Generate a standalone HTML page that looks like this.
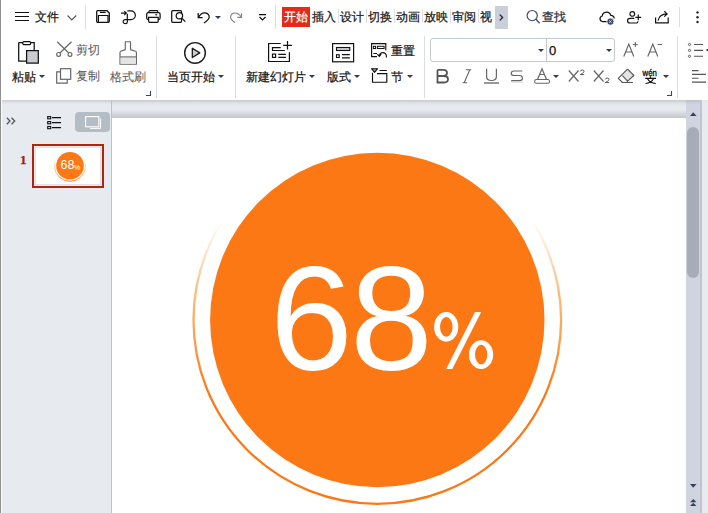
<!DOCTYPE html>
<html><head><meta charset="utf-8">
<style>
*{margin:0;padding:0;box-sizing:border-box}
html,body{width:708px;height:513px;overflow:hidden;background:#fff;font-family:"Liberation Sans",sans-serif;color:#222}
.a{position:absolute}
svg{position:absolute;overflow:visible}
.t{position:absolute;font-size:12px;line-height:12px;white-space:nowrap;color:#1a1a1a;-webkit-text-stroke:0.25px currentColor}
.g{color:#5e5e5e;-webkit-text-stroke:0.1px currentColor}
.sep{position:absolute;width:1px;background:#dadde5}
.tsep{position:absolute;width:1px;background:#dde0e6;top:9px;height:14px}
.arr{position:absolute;width:0;height:0;border-left:3px solid transparent;border-right:3px solid transparent;border-top:3px solid #2e3a55}
</style></head><body>
<!-- left window border -->
<div class="a" style="left:0;top:0;width:1px;height:513px;background:#8e8e8e"></div>

<!-- ===== TOP BAR ===== -->
<svg style="left:15px;top:12px" width="14" height="9"><path d="M0 0.5H14M0 4.5H14M0 8.5H14" stroke="#111" stroke-width="1.1"/></svg>
<div class="t" style="left:35px;top:11px">文件</div>
<svg style="left:67px;top:15px" width="10" height="6"><path d="M0.5 0.5L4.8 5L9.2 0.5" stroke="#555" stroke-width="1.1" fill="none"/></svg>
<div class="sep" style="left:85px;top:5px;height:24px"></div>
<!-- save -->
<svg style="left:96px;top:10px" width="14" height="13"><path d="M1.6 0.7H10.9L13.3 3.1V11.3Q13.3 12.3 12.3 12.3H1.6Q0.7 12.3 0.7 11.3V1.7Q0.7 0.7 1.6 0.7Z" stroke="#111" stroke-width="1.25" fill="none"/><path d="M4 2.4H9.6M2.4 12.3V5.5H12V12.3" stroke="#111" stroke-width="1.2" fill="none"/></svg>
<!-- share/route icon -->
<svg style="left:121px;top:10px" width="15" height="14"><path d="M0 3.1H5.2M3.3 1.1L5.3 3.1L3.3 5.1" stroke="#111" stroke-width="1.15" fill="none"/><path d="M6.3 3.8V12Q6.3 13.6 4.5 13.6Q2.2 13.6 2.2 11.6Q2.2 9.6 4.5 9.6H10A4.35 4.35 0 0 0 10 0.9H6.3" stroke="#111" stroke-width="1.2" fill="none"/></svg>
<!-- print -->
<svg style="left:146px;top:10px" width="15" height="13"><path d="M3 2.8V1.5Q3 0.7 3.8 0.7H11Q11.8 0.7 11.8 1.5V2.8" stroke="#111" stroke-width="1.2" fill="none"/><path d="M2.6 9.5H2.2Q0.7 9.5 0.7 8V4.3Q0.7 2.7 2.2 2.7H12.6Q14.1 2.7 14.1 4.3V8Q14.1 9.5 12.6 9.5H12.2M2.6 7.3V11.3Q2.6 12.3 3.6 12.3H11.2Q12.2 12.3 12.2 11.3V7.3Z" stroke="#111" stroke-width="1.25" fill="none"/><path d="M9.2 4.8H11.3" stroke="#111" stroke-width="1.1"/></svg>
<!-- preview -->
<svg style="left:171px;top:10px" width="16" height="14"><rect x="0.7" y="0.7" width="9.8" height="11.6" rx="1" stroke="#111" stroke-width="1.25" fill="none"/><circle cx="8.4" cy="5.7" r="3.2" stroke="#111" stroke-width="1.25" fill="#fff"/><path d="M10.8 8.1L14.3 11.6" stroke="#111" stroke-width="1.3"/></svg>
<!-- undo -->
<svg style="left:197px;top:12px" width="13" height="12"><path d="M1.2 1V5.6H5.6" stroke="#111" stroke-width="1.25" fill="none"/><path d="M1.6 5.2Q4 0.5 8.3 0.9Q12.2 1.6 12.2 5.2Q12.2 7.3 7 11" stroke="#111" stroke-width="1.25" fill="none"/></svg>
<div class="arr" style="left:215px;top:16px"></div>
<!-- redo -->
<svg style="left:230px;top:12px" width="13" height="12"><path d="M11.5 1.2V5.4H7.3" stroke="#7d8490" stroke-width="1.15" fill="none"/><path d="M11.1 5Q8.7 0.7 4.5 1Q0.6 1.7 0.6 5.2Q0.6 7.3 5 10.8" stroke="#7d8490" stroke-width="1.15" fill="none"/></svg>
<!-- customize -->
<svg style="left:259px;top:14px" width="8" height="7"><path d="M0 0.6H7M0.5 3L3.5 6L6.5 3" stroke="#111" stroke-width="1.2" fill="none"/></svg>
<div class="sep" style="left:275px;top:5px;height:24px"></div>
<!-- tabs -->
<div class="a" style="left:282px;top:7px;width:28px;height:20px;background:#e42a18"></div>
<div class="t" style="left:284px;top:11px;color:#fff">开始</div>
<div class="t" style="left:312px;top:11px">插入</div>
<div class="tsep" style="left:338px"></div>
<div class="t" style="left:340px;top:11px">设计</div>
<div class="tsep" style="left:366px"></div>
<div class="t" style="left:368px;top:11px">切换</div>
<div class="tsep" style="left:394px"></div>
<div class="t" style="left:396px;top:11px">动画</div>
<div class="tsep" style="left:422px"></div>
<div class="t" style="left:424px;top:11px">放映</div>
<div class="tsep" style="left:450px"></div>
<div class="t" style="left:452px;top:11px">审阅</div>
<div class="tsep" style="left:478px"></div>
<div class="t" style="left:480px;top:11px">视</div>
<div class="a" style="left:495px;top:6px;width:13px;height:23px;background:#c9ced8"></div>
<svg style="left:499px;top:14px" width="5" height="7"><path d="M0.8 0.6L3.6 3.5L0.8 6.4" stroke="#222" stroke-width="1.3" fill="none"/></svg>
<!-- search -->
<svg style="left:526px;top:10px" width="14" height="14"><circle cx="6.2" cy="5.6" r="5.1" stroke="#3f4a66" stroke-width="1.15" fill="none"/><path d="M9.9 9.3L13.6 13.2" stroke="#3f4a66" stroke-width="1.3"/></svg>
<div class="t" style="left:542px;top:11px;color:#2a3040">查找</div>
<!-- cloud -->
<svg style="left:599px;top:11px" width="17" height="14"><path d="M8 10.5H3.4A2.8 2.8 0 0 1 3.2 5A4.4 4.4 0 0 1 11.8 4.4A3.2 3.2 0 0 1 15.2 7.5" stroke="#111" stroke-width="1.25" fill="none"/><circle cx="11.4" cy="10.6" r="3.6" fill="#3c4868" stroke="#fff" stroke-width="0.8"/><path d="M10.3 9.5L12.5 11.7M12.5 9.5L10.3 11.7" stroke="#fff" stroke-width="0.9"/></svg>
<!-- person add -->
<svg style="left:627px;top:11px" width="15" height="13"><circle cx="5.3" cy="2.9" r="2.35" stroke="#111" stroke-width="1.2" fill="none"/><path d="M7.3 7.3H2.9A2.35 2.35 0 0 0 2.9 12H9.6Q10.8 12 10.8 10.8V10.2M11.3 3.4V9.2M8.4 6.3H14.2" stroke="#111" stroke-width="1.2" fill="none"/></svg>
<!-- share -->
<svg style="left:655px;top:11px" width="15" height="13"><path d="M0.6 6.5V11.9H13.2V6.5M3.1 9.6Q4.3 3.2 12 2.9M9.3 0.3L12.1 2.9L9.3 5.6" stroke="#111" stroke-width="1.2" fill="none"/></svg>
<div class="sep" style="left:679px;top:7px;height:20px"></div>
<svg style="left:696px;top:11px" width="3" height="12"><circle cx="1.5" cy="1.4" r="1.2" fill="#222"/><circle cx="1.5" cy="6.2" r="1.2" fill="#222"/><circle cx="1.5" cy="11" r="1.2" fill="#222"/></svg>

<!-- ===== RIBBON ===== -->
<!-- paste -->
<svg style="left:18px;top:41px" width="22" height="24"><path d="M0.7 1.6V20.1H8.6M16.2 9.6V1.6H0.7" stroke="#111" stroke-width="1.25" fill="none"/><rect x="4.8" y="0.6" width="7.8" height="3" rx="1" stroke="#111" stroke-width="1.2" fill="#fff"/><rect x="8.6" y="9.6" width="11.7" height="12.5" stroke="#111" stroke-width="1.25" fill="#c8cbcf"/></svg>
<div class="t" style="left:12px;top:71px">粘贴</div>
<div class="arr" style="left:39px;top:75px"></div>
<!-- scissors -->
<svg style="left:56px;top:41px" width="17" height="16"><path d="M1.2 0.8L13 12.3M15.5 0.8L3.7 12.3" stroke="#666" stroke-width="1.2" fill="none"/><circle cx="2.6" cy="13.4" r="1.9" stroke="#666" stroke-width="1.2" fill="#fff"/><circle cx="14" cy="13.4" r="1.9" stroke="#666" stroke-width="1.2" fill="#fff"/></svg>
<div class="t g" style="left:76px;top:44px">剪切</div>
<!-- copy -->
<svg style="left:56px;top:68px" width="16" height="16"><path d="M4.5 3.8H0.7V15.2H11.2V11.3" stroke="#666" stroke-width="1.2" fill="none"/><rect x="4.5" y="0.7" width="10.2" height="10.6" stroke="#666" stroke-width="1.2" fill="#fff"/></svg>
<div class="t g" style="left:76px;top:70px">复制</div>
<!-- format brush -->
<svg style="left:119px;top:41px" width="19" height="24"><path d="M6.3 0.7H11.5V8.6L16.6 10.2Q17.4 10.5 17.4 11.3V23.2H1V11.3Q1 10.5 1.8 10.2L6.3 8.6Z" stroke="#666" stroke-width="1.15" fill="#fff" stroke-linejoin="round"/><rect x="1.6" y="16.3" width="15.2" height="6.4" fill="#e4e4e4"/><path d="M1 15.9H17.4" stroke="#666" stroke-width="1.1"/></svg>
<div class="t g" style="left:110px;top:71px">格式刷</div>
<svg style="left:146px;top:91px" width="5" height="5"><path d="M0 4.5H4.5V0" stroke="#3a4560" stroke-width="1.1" fill="none"/></svg>
<div class="sep" style="left:156px;top:36px;height:62px"></div>
<!-- play -->
<svg style="left:184px;top:42px" width="23" height="23"><circle cx="11" cy="10.9" r="10.3" stroke="#1a1a1a" stroke-width="1.4" fill="none"/><path d="M8.3 6.3V15.5L15.8 10.9Z" stroke="#1a1a1a" stroke-width="1.3" fill="#c9cdd2" stroke-linejoin="round"/></svg>
<div class="t" style="left:167px;top:71px">当页开始</div>
<div class="arr" style="left:218px;top:75px"></div>
<div class="sep" style="left:235px;top:36px;height:62px"></div>
<!-- new slide -->
<svg style="left:268px;top:41px" width="24" height="22"><path d="M12.7 2.5H0.6V20.5H21.4V11.3M19.5 0V8.6M15.2 4.4H23.9M12.7 6.7H4.5V9.5H16.8M10.3 13.4H17.9M10.3 16.4H17.9" stroke="#111" stroke-width="1.2" fill="none"/><rect x="4.5" y="13.1" width="3.1" height="3.3" stroke="#111" stroke-width="1.2" fill="none"/></svg>
<div class="t" style="left:246px;top:71px">新建幻灯片</div>
<div class="arr" style="left:309px;top:75px"></div>
<!-- layout -->
<svg style="left:332px;top:43px" width="22" height="19"><rect x="0.6" y="0.6" width="21" height="18.2" stroke="#111" stroke-width="1.2" fill="none"/><rect x="4.5" y="4.5" width="13.3" height="3" fill="#c8cbcf" stroke="#111" stroke-width="1.1"/><rect x="4.5" y="11.7" width="2.7" height="2.8" stroke="#111" stroke-width="1.1" fill="none"/><path d="M10 11.6H17.8M10 14.8H17.8" stroke="#111" stroke-width="1.15"/></svg>
<div class="t" style="left:327px;top:71px">版式</div>
<div class="arr" style="left:354px;top:75px"></div>
<!-- reset -->
<svg style="left:371px;top:43px" width="17" height="15"><path d="M6 13.6H0.6V0.6H14.8V7.3M2.4 10.5H6M8.3 13.2A3.55 3.55 0 0 1 15.4 13.2V14.6M6.4 11.2L8.3 13.4L10.2 11.2" stroke="#111" stroke-width="1.15" fill="none"/><rect x="2.4" y="3.3" width="2.2" height="2.2" stroke="#111" stroke-width="1" fill="none"/><rect x="6.4" y="3.3" width="6.7" height="2.2" stroke="#111" stroke-width="1" fill="none"/></svg>
<div class="t" style="left:391px;top:45px">重置</div>
<!-- section -->
<svg style="left:371px;top:68px" width="17" height="15"><path d="M0.5 0.7H6.6L3.55 4.3Z" stroke="#111" stroke-width="1.1" fill="#9ba0a8" stroke-linejoin="round"/><path d="M8.5 2.5H15.8M6 5.6H15.8V14.2H1.5V4.7" stroke="#111" stroke-width="1.15" fill="none"/></svg>
<div class="t" style="left:391px;top:71px">节</div>
<div class="arr" style="left:407px;top:75px"></div>
<div class="sep" style="left:424px;top:36px;height:62px"></div>
<!-- font combos -->
<div class="a" style="left:430px;top:38px;width:185px;height:24px;border:1px solid #c4c8d0;border-radius:3px"></div>
<div class="a" style="left:546px;top:39px;width:1px;height:22px;background:#c4c8d0"></div>
<div class="arr" style="left:538px;top:49px"></div>
<div class="arr" style="left:606px;top:49px"></div>
<div class="t" style="left:549px;top:45px;font-size:13px;font-family:'Liberation Sans';color:#111">0</div>
<!-- B I U S A -->
<svg style="left:436px;top:69px" width="14" height="15"><path d="M1.5 0.8H7.2Q11 0.8 11 4Q11 6.8 7.5 7H1.5M7.5 7Q12 7 12 10.3Q12 13.5 8 13.5H1.5V0.8" stroke="#555" stroke-width="1.8" fill="none"/></svg>
<svg style="left:462px;top:69px" width="10" height="15"><path d="M7.8 0.8L2.2 13.7M3.8 0.8H9.3M0.6 13.7H5.2" stroke="#666" stroke-width="1.1" fill="none"/></svg>
<svg style="left:484px;top:68px" width="15" height="16"><path d="M2.6 0.7V8.5Q2.6 12.5 7.5 12.5Q12.4 12.5 12.4 8.5V0.7" stroke="#666" stroke-width="1.2" fill="none"/><path d="M0 15H15" stroke="#555" stroke-width="1.2"/></svg>
<svg style="left:510px;top:70px" width="14" height="12"><path d="M12.3 1H4Q1.2 1 1.2 3.5Q1.2 5.5 4 5.5H9.5Q12.4 5.5 12.4 8.2Q12.4 10.6 9.5 10.6H1.2" stroke="#666" stroke-width="1.2" fill="none"/><path d="M1 12H13" stroke="#ccc" stroke-width="1"/></svg>
<svg style="left:534px;top:68px" width="17" height="16"><path d="M3.5 11.5L8 0.7L12.5 11.5M5.3 6.5H10.6" stroke="#666" stroke-width="1.2" fill="none"/><rect x="0.6" y="11.5" width="15" height="3.8" rx="1.9" stroke="#666" stroke-width="1.1" fill="#fff"/></svg>
<div class="arr" style="left:553px;top:75px"></div>
<svg style="left:568px;top:69px" width="17" height="14"><path d="M0.8 1.5L10.5 12.5M10.5 1.5L0.8 12.5" stroke="#666" stroke-width="1.2"/></svg>
<svg style="left:579.8px;top:70.2px" width="5" height="5"><path d="M0.3 1.4Q0.6 0 2.2 0Q4 0 4 1.4Q4 2.3 2.8 3.1L0.3 4.6H4.2" stroke="#555" stroke-width="1" fill="none"/></svg>
<svg style="left:593px;top:70px" width="17" height="14"><path d="M0.8 0.5L10.5 11.5M10.5 0.5L0.8 11.5" stroke="#666" stroke-width="1.2"/></svg>
<svg style="left:604.7px;top:77.9px" width="5" height="5"><path d="M0.3 1.4Q0.6 0 2.2 0Q4 0 4 1.4Q4 2.3 2.8 3.1L0.3 4.6H4.2" stroke="#555" stroke-width="1" fill="none"/></svg>
<!-- eraser -->
<svg style="left:617px;top:68px" width="18" height="16"><path d="M10.5 1.2L16.9 7.5L10.5 13.1L5.4 7.2Z" fill="#e3e3e3"/><path d="M10.5 1.2L16.9 7.5L10.5 13.1L5.4 7.6M10.5 1.2L1.3 10.3L5.4 14.5H15.9M10.5 13.1V14.5" stroke="#555" stroke-width="1.1" fill="none" stroke-linejoin="round"/></svg>
<!-- A+ A- -->
<svg style="left:623px;top:42px" width="16" height="15"><path d="M0.8 14.5L5.8 2L10.8 14.5M2.6 10H9" stroke="#666" stroke-width="1.2" fill="none"/><path d="M12.3 0V5M9.8 2.5H14.8" stroke="#666" stroke-width="1.1"/></svg>
<svg style="left:647px;top:42px" width="16" height="15"><path d="M0.8 14.5L5.8 2L10.8 14.5M2.6 10H9" stroke="#666" stroke-width="1.2" fill="none"/><path d="M10.5 2.5H15" stroke="#666" stroke-width="1.1"/></svg>
<!-- wen -->
<svg style="left:0;top:0" width="708" height="100"><text x="0" y="0" transform="translate(642.6 75.9) scale(0.8 1)" font-family="Liberation Sans" font-size="9.8" fill="#111" stroke="#111" stroke-width="0.35">wén</text></svg>
<svg style="left:645px;top:76px" width="12" height="8"><path d="M5.5 0.3V2.4M0.2 2.4H11M2.6 2.8Q4.5 7 10.8 7.5M8.4 2.8Q6.5 7 0.5 7.5" stroke="#111" stroke-width="1.15" fill="none"/></svg>
<div class="arr" style="left:663px;top:75px"></div>
<svg style="left:667px;top:91px" width="5" height="5"><path d="M0 4.5H4.5V0" stroke="#3a4560" stroke-width="1.1" fill="none"/></svg>
<div class="sep" style="left:677px;top:36px;height:62px"></div>
<!-- list -->
<svg style="left:688px;top:43px" width="20" height="15"><circle cx="1.5" cy="1.5" r="1.1" stroke="#555" stroke-width="0.9" fill="none"/><circle cx="1.5" cy="7.4" r="1.1" stroke="#555" stroke-width="0.9" fill="none"/><circle cx="1.5" cy="13.3" r="1.1" stroke="#555" stroke-width="0.9" fill="none"/><path d="M6 1.5H15M6 7.4H15M6 13.3H15" stroke="#555" stroke-width="1.1"/><path d="M18.5 7H20" stroke="#2e3a55" stroke-width="2"/></svg>
<svg style="left:692px;top:70px" width="16" height="13"><path d="M0 0.6H6.5M0 4.4H14M0 8.2H6.5M0 12.1H14" stroke="#555" stroke-width="1.1"/></svg>

<!-- ===== LOWER AREA ===== -->
<div class="a" style="left:2px;top:100px;width:706px;height:413px;background:#e7ebf0"></div>
<div class="a" style="left:2px;top:100px;width:706px;height:4px;background:linear-gradient(#cbcfd4,#e7ebf0)"></div>
<!-- left panel -->
<svg style="left:6px;top:117px" width="10" height="8"><path d="M0.8 0.7L4 4L0.8 7.3M5.5 0.7L8.7 4L5.5 7.3" stroke="#555" stroke-width="1.3" fill="none"/></svg>
<svg style="left:47px;top:116px" width="14" height="13"><rect x="0.7" y="0.6" width="3" height="2.2" stroke="#111" stroke-width="1.1" fill="none"/><rect x="0.7" y="5.6" width="3" height="2.2" stroke="#111" stroke-width="1.1" fill="none"/><rect x="0.7" y="10.5" width="3" height="2.2" stroke="#111" stroke-width="1.1" fill="none"/><path d="M5 1.7H14M5 6.7H14M5 11.6H14" stroke="#111" stroke-width="1.2"/></svg>
<div class="a" style="left:75px;top:112px;width:35px;height:20px;background:#b4bdc5;border-radius:4px"></div>
<svg style="left:85px;top:116px" width="17" height="13"><rect x="0.6" y="0.6" width="13.2" height="10.2" stroke="#fff" stroke-width="1.1" fill="none"/><path d="M15.6 2.5V12.4H5" stroke="#fff" stroke-width="1" fill="none"/></svg>
<div class="a" style="left:111px;top:100px;width:1px;height:413px;background:#bcc1cb"></div>
<div class="t" style="left:20px;top:154px;font-family:'Liberation Serif',serif;font-weight:bold;font-size:13px;color:#a0200a">1</div>
<div class="a" style="left:32px;top:144px;width:72px;height:44px;border:2px solid #b0250c"></div>
<div class="a" style="left:35px;top:147px;width:66px;height:38px;border:1px solid #dfe3e8;background:#fff"></div>
<svg style="left:0;top:0" width="708" height="513">
  <defs><linearGradient id="rg2" x1="0" y1="0" x2="0" y2="1"><stop offset="0.25" stop-color="#fc7814" stop-opacity="0"/><stop offset="1" stop-color="#fc7814" stop-opacity="1"/></linearGradient></defs>
  <circle cx="70" cy="165.7" r="15.6" stroke="url(#rg2)" stroke-width="0.9" fill="none"/>
  <circle cx="70" cy="165.7" r="13.8" fill="#fc7814"/>
  <text x="60.6" y="169" font-family="Liberation Sans" font-size="12.5" fill="#fff">68</text>
  <text x="74" y="169.5" font-family="Liberation Sans" font-size="7" fill="#fff">%</text>
</svg>

<!-- slide area header strip -->
<div class="a" style="left:112px;top:100px;width:574px;height:18px;background:linear-gradient(#c6cacf 0,#dde1e6 3px,#e7ebf0 6px,#e7ebf0 10px,#d3d7dc 14px,#c4c8cd 18px)"></div>
<!-- slide -->
<div class="a" style="left:112px;top:118px;width:574px;height:395px;background:#fff"></div>
<svg style="left:0;top:0" width="708" height="513">
  <defs><linearGradient id="rg" gradientUnits="userSpaceOnUse" x1="0" y1="136" x2="0" y2="504"><stop offset="0.23" stop-color="#fbb460" stop-opacity="0"/><stop offset="0.42" stop-color="#fba650" stop-opacity="0.75"/><stop offset="0.7" stop-color="#fc7814" stop-opacity="1"/></linearGradient></defs>
  <circle cx="377.3" cy="320" r="183.8" stroke="url(#rg)" stroke-width="2.3" fill="none"/>
  <circle cx="377.3" cy="320" r="167.2" fill="#fc7814"/>
  <text x="270" y="370" font-family="Liberation Sans" font-size="149" fill="#fff">6</text><text x="0" y="0" font-family="Liberation Sans" font-size="149" fill="#fff" transform="translate(350 370)">8</text>
  <path fill-rule="evenodd" fill="#fff" d="M434.10 326.90A12.1 14.75 0 1 0 458.30 326.90A12.1 14.75 0 1 0 434.10 326.90ZM440.00 326.85A6.3 9.85 0 1 0 452.60 326.85A6.3 9.85 0 1 0 440.00 326.85ZM468.90 354.65A12.15 14.45 0 1 0 493.20 354.65A12.15 14.45 0 1 0 468.90 354.65ZM475.00 354.55A6.15 9.75 0 1 0 487.30 354.55A6.15 9.75 0 1 0 475.00 354.55Z"/><path fill="#fff" d="M475 312.1H481.2L452.3 369.1H446.2Z"/>
</svg>

<!-- scrollbar -->
<div class="a" style="left:686px;top:100px;width:14px;height:413px;background:#cfd4e0"></div>
<div class="a" style="left:700px;top:100px;width:2px;height:413px;background:#bfc4cf"></div>
<div class="a" style="left:702px;top:100px;width:6px;height:413px;background:#e7ebf0"></div>
<div class="a" style="left:686px;top:100px;width:14px;height:4px;background:linear-gradient(#b9bfcb,#cfd4e0)"></div>
<div class="a" style="left:687px;top:127px;width:12px;height:151px;background:#a7adb8;border-radius:6px"></div>
<svg style="left:690px;top:112px" width="7" height="4"><path d="M0 4H6.5L3.25 0.3Z" fill="#34405e"/></svg>
<svg style="left:690px;top:484px" width="7" height="4"><path d="M0 0H6.5L3.25 3.7Z" fill="#34405e"/></svg>
<svg style="left:690px;top:499px" width="7" height="7"><path d="M0 3.3H6.5L3.25 0Z M0 7H6.5L3.25 3.7Z" fill="#34405e"/></svg>
</body></html>
